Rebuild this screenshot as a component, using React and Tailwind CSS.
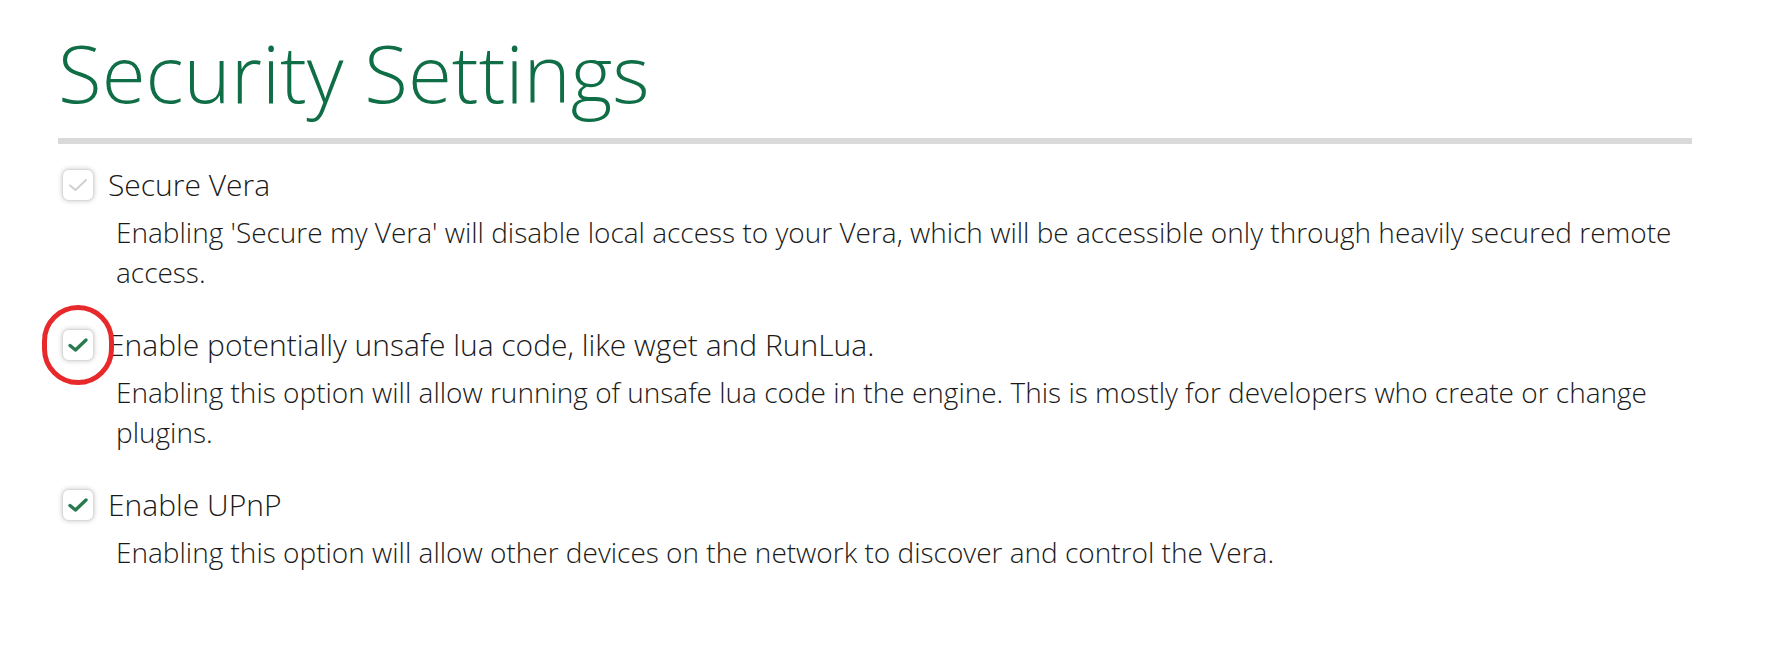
import React from "react";

function Checkbox({ disabled }) {
  return (
    <div className="w-[32px] h-[32px] shrink-0 rounded-[7px] border border-[#d9d9d9] bg-white shadow-[0_0_5px_rgba(0,0,0,0.22)] flex items-center justify-center">
      <svg width="22" height="16" viewBox="0 0 22 16">
        <polyline
          points="3,8.5 8.5,13 19,3"
          fill="none"
          stroke={disabled ? "#d0d0d0" : "#2a7a50"}
          strokeWidth={disabled ? 2 : 3.4}
          strokeLinecap="round"
          strokeLinejoin="round"
        />
      </svg>
    </div>
  );
}

function Item({ title, desc, disabled, circled }) {
  return (
    <div className="flex flex-col">
      <div className="flex items-center h-[40px]">
        <div className="relative ml-[4px]">
          <Checkbox disabled={disabled} />
          {circled && (
            <div className="absolute left-[-20px] top-[-24px] w-[72px] h-[80px] rounded-full border-[5px] border-[#e8292b]" />
          )}
        </div>
        <span className="ml-[14px] text-[30px] leading-[40px] text-[#1a1a1a]">{title}</span>
      </div>
      <p className="mt-[7px] ml-[58px] text-[28px] leading-[40px] text-[#1a1a1a]">{desc}</p>
    </div>
  );
}

export default function App() {
  return (
    <div
      className="w-[1780px] h-[652px] bg-white overflow-hidden"
      style={{ fontFamily: '"Open Sans", sans-serif', fontWeight: 300 }}
    >
      <div className="pl-[58px] pr-[88px] pt-[32px]">
        <h1 className="text-[80px] leading-[80px] text-[#0f6e45] font-light">Security Settings</h1>
        <div className="mt-[26px] h-[6px] bg-[#d9d9d9]" />
        <div className="mt-[21px] flex flex-col gap-[33px]">
          <Item
            disabled
            title="Secure Vera"
            desc="Enabling 'Secure my Vera' will disable local access to your Vera, which will be accessible only through heavily secured remote access."
          />
          <Item
            circled
            title="Enable potentially unsafe lua code, like wget and RunLua."
            desc="Enabling this option will allow running of unsafe lua code in the engine. This is mostly for developers who create or change plugins."
          />
          <Item
            title="Enable UPnP"
            desc="Enabling this option will allow other devices on the network to discover and control the Vera."
          />
        </div>
      </div>
    </div>
  );
}
